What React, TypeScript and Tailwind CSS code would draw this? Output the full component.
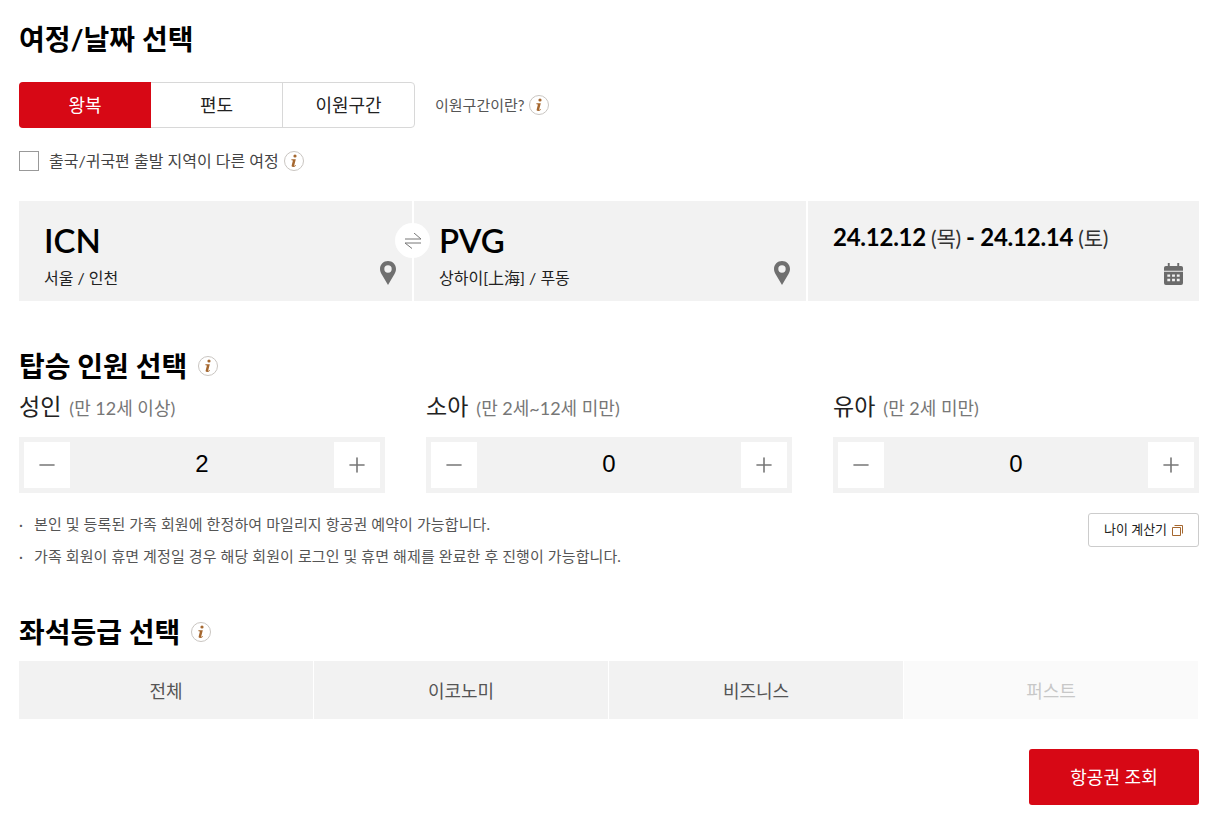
import { Minus, Plus } from "lucide-react";

const FONT = "font-['Lato','Noto_Sans_CJK_KR',sans-serif]";

function InfoIcon({ size = 20 }: { size?: number }) {
  return (
    <svg width={size} height={size} viewBox="0 0 20 20" className="shrink-0">
      <circle cx="10" cy="10" r="9.5" fill="#fff" stroke="#c9c5c1" />
      <circle cx="11" cy="5" r="1.6" fill="#a5672f" />
      <path
        d="M7.300 8.300h4.500l-1.600 6.100c-.1.400.2.500.5.300l1.100-.8.300.6c-1 1-2 1.500-3 1.500-1.200 0-1.700-.6-1.400-1.700l1.100-4.400c.1-.5-.1-.7-.6-.7h-.7l-.2-.9Z"
        fill="#a5672f"
      />
    </svg>
  );
}

function PinIcon() {
  return (
    <svg width="16" height="24" viewBox="0 0 16 24">
      <path
        fillRule="evenodd"
        d="M8 0C3.500 0 0 3.500 0 8c0 1.900.6 3.400 1.500 5L8 24l6.500-11c.9-1.600 1.500-3.100 1.500-5 0-4.500-3.500-8-8-8Zm0 4.300a3.700 3.700 0 1 1 0 7.400 3.700 3.700 0 0 1 0-7.400Z"
        fill="#707070"
      />
    </svg>
  );
}

function CalendarIcon() {
  return (
    <svg width="19" height="22" viewBox="0 0 20 23">
      <path
        fillRule="evenodd"
        d="M4 0h2v3h8V0h2v3h2a2 2 0 0 1 2 2v3H0V5a2 2 0 0 1 2-2h2V0ZM0 9h20v12a2 2 0 0 1-2 2H2a2 2 0 0 1-2-2V9Zm3.500 3v2.500H6.500V12h-3Zm5 0v2.500h3V12h-3Zm5 0v2.500h3V12h-3Zm-10 4.500V19H6.500v-2.500h-3Zm5 0V19h3v-2.500h-3Zm5 0V19h3v-2.500h-3Z"
        fill="#6b6b6b"
      />
    </svg>
  );
}

function SwapIcon() {
  return (
    <svg width="16" height="16" viewBox="0 0 16 16" fill="none" stroke="#777" strokeWidth="1">
      <path d="M0 6h16L9 0" />
      <path d="M16 10H0l7 5.500" />
    </svg>
  );
}

function Heading({ text, info }: { text: string; info?: boolean }) {
  return (
    <div className="flex items-center gap-[11px]">
      <h2 className="text-[28px] leading-[36px] font-bold text-black">{text}</h2>
      {info && <InfoIcon />}
    </div>
  );
}

function Counter({ label, desc, value }: { label: string; desc: string; value: number }) {
  return (
    <div className="w-[366px]">
      <div className="flex items-baseline gap-[8px] h-[34px]">
        <span className="text-[23px] leading-[28px] text-[#222]">{label}</span>
        <span className="text-[18px] leading-[28px] text-[#777]">{desc}</span>
      </div>
      <div className="mt-[11px] h-[56px] bg-[#f2f2f2] p-[5px] flex items-center justify-between">
        <button className="w-[46px] h-[46px] bg-white flex items-center justify-center text-[#777]">
          <Minus size={24} strokeWidth={1.6} />
        </button>
        <span className="text-[24px] pb-[2px] text-black font-['Liberation_Sans',sans-serif]">{value}</span>
        <button className="w-[46px] h-[46px] bg-white flex items-center justify-center text-[#777]">
          <Plus size={24} strokeWidth={1.6} />
        </button>
      </div>
    </div>
  );
}

function RouteCell({ code, city, width }: { code: string; city: string; width: string }) {
  return (
    <div className={`relative ${width} h-[100px] bg-[#f2f2f2] pl-[25px] pt-[17px]`}>
      <div className="text-[33px] leading-[44px] font-semibold text-black">{code}</div>
      <div className="mt-[5px] text-[16px] leading-[22px] text-[#222]">{city}</div>
      <div className="absolute right-[16px] bottom-[16px]">
        <PinIcon />
      </div>
    </div>
  );
}

export default function App() {
  return (
    <div className={`${FONT} w-[1227px] h-[832px] bg-white pl-[19px] pr-[28px] pt-[21px] overflow-hidden`}>
      <Heading text="여정/날짜 선택" />

      <div className="mt-[25px] flex items-center">
        <div className="flex w-[396px] h-[46px] rounded-[4px] border border-[#d8d8d8] text-[18px] text-[#222]">
          <button className="w-[132px] -my-px -ml-px rounded-l-[4px] bg-[#d70815] text-white">왕복</button>
          <button className="w-[132px] border-r border-[#d8d8d8]">편도</button>
          <button className="flex-1">이원구간</button>
        </div>
        <span className="ml-[20px] text-[15px] text-[#555]">이원구간이란?</span>
        <span className="ml-[4px]">
          <InfoIcon />
        </span>
      </div>

      <div className="mt-[23px] flex items-center h-[20px]">
        <span className="w-[20px] h-[20px] border border-[#999] bg-white" />
        <span className="ml-[10px] text-[16px] text-[#444]">출국/귀국편 출발 지역이 다른 여정</span>
        <span className="ml-[5px]">
          <InfoIcon />
        </span>
      </div>

      <div className="relative mt-[30px] flex gap-[2px]">
        <RouteCell code="ICN" city="서울 / 인천" width="w-[393px]" />
        <RouteCell code="PVG" city="상하이[上海] / 푸동" width="w-[392px]" />
        <div className="relative flex-1 h-[100px] bg-[#f2f2f2] pl-[25px] pt-[20px]">
          <div className="flex items-baseline text-[24px] leading-[32px] font-bold text-black whitespace-pre tracking-[-0.25px]">
            <span>24.12.12</span>
            <span className="text-[21px] font-normal text-[#333]"> (목) </span>
            <span>- 24.12.14</span>
            <span className="text-[21px] font-normal text-[#333]"> (토)</span>
          </div>
          <div className="absolute right-[16px] bottom-[16px]">
            <CalendarIcon />
          </div>
        </div>
        <div className="absolute z-10 left-[376px] top-[22px] w-[35px] h-[35px] rounded-full bg-white flex items-center justify-center">
          <SwapIcon />
        </div>
      </div>

      <div className="mt-[47px]">
        <Heading text="탑승 인원 선택" info />
      </div>

      <div className="mt-[8px] flex gap-[41px]">
        <Counter label="성인" desc="(만 12세 이상)" value={2} />
        <Counter label="소아" desc="(만 2세~12세 미만)" value={0} />
        <Counter label="유아" desc="(만 2세 미만)" value={0} />
      </div>

      <div className="mt-[20px] flex justify-between items-start">
        <ul className="text-[15px] leading-[22px] text-[#555] tracking-[0.1px] space-y-[10px]">
          <li className="flex">
            <span className="w-[15px]">·</span>본인 및 등록된 가족 회원에 한정하여 마일리지 항공권 예약이 가능합니다.
          </li>
          <li className="flex">
            <span className="w-[15px]">·</span>가족 회원이 휴면 계정일 경우 해당 회원이 로그인 및 휴면 해제를 완료한 후 진행이 가능합니다.
          </li>
        </ul>
        <button className="w-[111px] h-[34px] rounded-[3px] border border-[#ccc] flex items-center justify-center gap-[5px] text-[13px] text-[#222]">
          나이 계산기
          <svg width="11" height="11" viewBox="0 0 11 11" fill="none" stroke="#a5672f">
            <path d="M.5 2.500h8v8h-8z" />
            <path d="M2.500.5h8v8" />
          </svg>
        </button>
      </div>

      <div className="mt-[47px]">
        <Heading text="좌석등급 선택" info />
      </div>

      <div className="mt-[11px] flex h-[58px] w-[1179px] gap-px text-[18px]">
        <button className="flex-1 pt-[2px] bg-[#f2f2f2] text-[#555]">전체</button>
        <button className="flex-1 pt-[2px] bg-[#f2f2f2] text-[#555]">이코노미</button>
        <button className="flex-1 pt-[2px] bg-[#f2f2f2] text-[#555]">비즈니스</button>
        <button className="flex-1 pt-[2px] bg-[#fafafa] text-[#c8c8c8]">퍼스트</button>
      </div>

      <div className="mt-[30px] flex justify-end">
        <button className="w-[170px] h-[56px] rounded-[3px] bg-[#d70815] text-white text-[18px]">항공권 조회</button>
      </div>
    </div>
  );
}
